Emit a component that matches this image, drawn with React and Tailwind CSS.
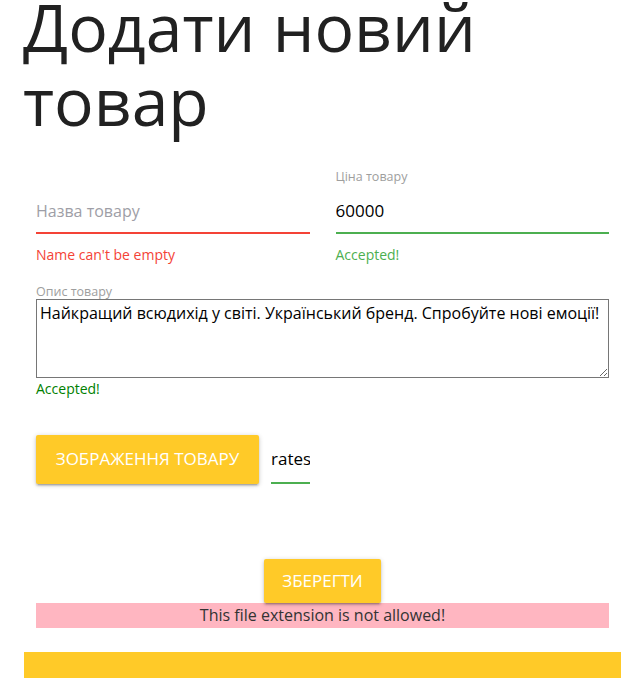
import React from 'react';

const font = { fontFamily: '"Open Sans", "Noto Sans", sans-serif' };

const shadow =
  'shadow-[0_2px_2px_0_rgba(0,0,0,0.14),0_3px_1px_-2px_rgba(0,0,0,0.12),0_1px_5px_0_rgba(0,0,0,0.2)]';

const Field = ({ label, value, placeholder, ok, message }) => (
  <div className="flex-1 px-[13px]">
    <div className="h-4 text-[12.5px] leading-4 text-[#9e9e9e]">{label}</div>
    <input
      readOnly
      defaultValue={value}
      placeholder={placeholder}
      className={`mt-[3px] block h-[46px] w-full border-b-2 bg-transparent text-[17px] text-black outline-none placeholder:text-[16px] placeholder:text-[#9e9ea6] ${
        ok ? 'border-[#4caf50]' : 'border-[#f44336]'
      }`}
    />
    <div
      className={`mt-[13px] text-[14px] leading-4 ${ok ? 'text-[#4caf50]' : 'text-[#f44336]'}`}
    >
      {message}
    </div>
  </div>
);

export default function App() {
  return (
    <div className="min-h-[678px] overflow-hidden bg-white" style={font}>
      <div className="ml-[23px] mr-[10px]">
        {/* Heading */}
        <h1 className="-mt-[11px] text-[66px] font-normal leading-[74px] text-[#212121]">
          Додати новий товар
        </h1>

        {/* Name / price */}
        <div className="mt-[32px] flex">
          <Field placeholder="Назва товару" ok={false} message="Name can't be empty" />
          <Field label="Ціна товару" value="60000" ok message="Accepted!" />
        </div>

        {/* Description */}
        <div className="px-[13px]">
          <div className="mt-[21px] h-[15px] text-[12.5px] leading-[15px] text-[#9e9e9e]">
            Опис товару
          </div>
          <textarea
            readOnly
            defaultValue="Найкращий всюдихід у світі. Український бренд. Спробуйте нові емоції!"
            className="block h-[79px] w-full border border-[#767676] px-[3px] py-[1px] text-[16px] leading-[24px] text-black outline-none"
          />
          <div className="mt-[3px] text-[14px] leading-4 text-[#008000]">Accepted!</div>

          {/* Image upload */}
          <div className="mt-[37px] flex items-center gap-3">
            <button
              className={`h-[49px] w-[223px] rounded-[2px] bg-[#ffca28] text-[17px] uppercase text-white ${shadow}`}
            >
              Зображення товару
            </button>
            <div className="flex h-[50px] w-[39px] items-center overflow-hidden whitespace-nowrap border-b-2 border-[#4caf50] pt-[2px] text-[17px] text-black">
              rates.csv
            </div>
          </div>
        </div>

        {/* Save */}
        <div className="mt-[75px] flex justify-center">
          <button
            className={`h-[44px] w-[117px] rounded-[2px] bg-[#ffca28] text-[17px] uppercase text-white ${shadow}`}
          >
            Зберегти
          </button>
        </div>
        <div className="mx-[13px] h-[25px] bg-[#ffb6c1] text-center text-[16px] leading-[25px] text-[#333]">
          This file extension is not allowed!
        </div>

        {/* Footer */}
        <div className="ml-px mr-px mt-6 h-[30px] bg-[#ffca28]" />
      </div>
    </div>
  );
}
